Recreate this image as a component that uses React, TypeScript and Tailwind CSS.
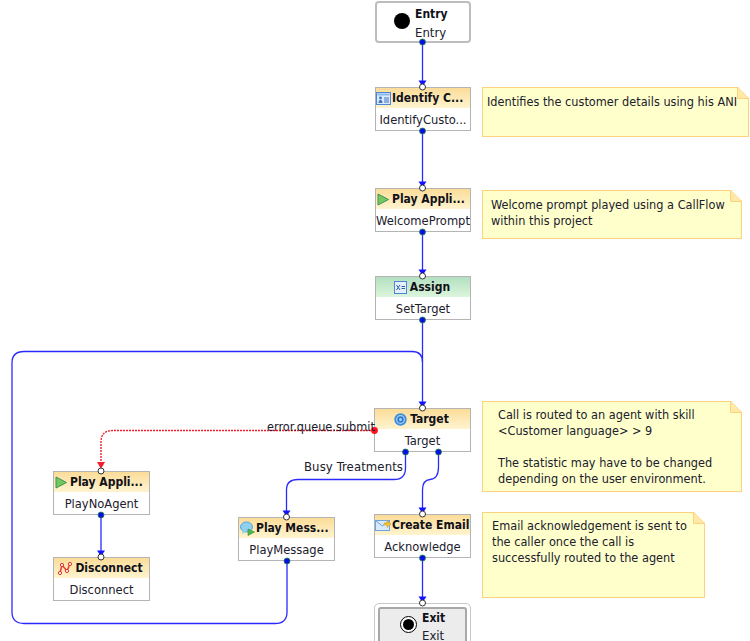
const font = "font-['DejaVu_Sans_Condensed','DejaVu_Sans',sans-serif]";

function IdentifyIcon() {
  return (
    <svg width="15" height="13" viewBox="0 0 15 13" className="shrink-0">
      <rect x="0.5" y="0.5" width="14" height="12" fill="#dbeafc" stroke="#4d86d6" />
      <rect x="1.5" y="1.5" width="12" height="2" fill="#8db8ec" />
      <circle cx="4.5" cy="6" r="1.4" fill="#3f74c4" />
      <path d="M2.5 11 Q2.5 8 4.5 8 Q6.5 8 6.5 11 Z" fill="#3f74c4" />
      <path d="M8 6h5M8 8h5M8 10h5" stroke="#3f74c4" />
    </svg>
  );
}

function PlayIcon() {
  return (
    <svg width="12" height="13" viewBox="0 0 12 13" className="shrink-0">
      <path d="M1 1 L11.5 6.5 L1 12 Z" fill="#74c860" stroke="#3f8f5a" />
    </svg>
  );
}

function AssignIcon() {
  return (
    <svg width="13" height="13" viewBox="0 0 13 13" className="shrink-0">
      <rect x="0.5" y="0.5" width="12" height="12" fill="#e6f0fc" stroke="#4d86d6" />
      <path d="M2.5 4 L6 9 M6 4 L2.5 9" stroke="#2c5ea8" />
      <path d="M7.5 5.5h3.5M7.5 7.5h3.5" stroke="#2c5ea8" />
    </svg>
  );
}

function TargetIcon() {
  return (
    <svg width="13" height="13" viewBox="0 0 13 13" className="shrink-0">
      <circle cx="6.5" cy="6.5" r="6.2" fill="#3d8fe0" />
      <circle cx="6.5" cy="6.5" r="4.4" fill="#a9d4f7" />
      <circle cx="6.5" cy="6.5" r="3.2" fill="#2b78d0" />
      <circle cx="6.5" cy="6.5" r="1.5" fill="#a9d4f7" />
    </svg>
  );
}

function DisconnectIcon() {
  return (
    <svg width="14" height="13" viewBox="0 0 14 13" className="shrink-0">
      <path d="M2 11 L4 3 L9 9 L12 2" fill="none" stroke="#e8302a" strokeWidth="1.4" />
      <circle cx="2" cy="11" r="1.6" fill="#fff" stroke="#e8302a" />
      <circle cx="4" cy="3" r="1.6" fill="#fff" stroke="#e8302a" />
      <circle cx="9" cy="9" r="1.6" fill="#fff" stroke="#e8302a" />
      <circle cx="12" cy="2" r="1.6" fill="#fff" stroke="#e8302a" />
    </svg>
  );
}

function MessageIcon() {
  return (
    <svg width="15" height="15" viewBox="0 0 15 15" className="shrink-0">
      <ellipse cx="6.5" cy="6" rx="6" ry="5" fill="#8fd0f0" stroke="#5aa5d6" />
      <path d="M3 9 L2 13 L6 10.5 Z" fill="#8fd0f0" />
      <path d="M8 8 L14.5 11 L8 14.5 Z" fill="#4cb84a" stroke="#2f8a3a" strokeWidth="0.6" />
    </svg>
  );
}

function EmailIcon() {
  return (
    <svg width="16" height="13" viewBox="0 0 16 13" className="shrink-0">
      <rect x="0.5" y="1.5" width="14" height="10" fill="#d8eafb" stroke="#6ea4dc" />
      <path d="M1 2 L7.5 7 L14 2" fill="none" stroke="#6ea4dc" />
      <path d="M9 4 H12 V1.5 L16 5 L12 8.5 V6 H9 Z" fill="#f4c430" stroke="#c9952a" strokeWidth="0.5" />
    </svg>
  );
}

type NodeProps = {
  place: string;
  title: string;
  name: string;
  icon: React.ReactNode;
  green?: boolean;
  titleAlign?: string;
};

function FlowNode({ place, title, name, icon, green, titleAlign = "justify-center gap-[3px] pr-[2px]" }: NodeProps) {
  return (
    <div className={`absolute h-[44px] border border-[#b4b4b4] bg-white ${place}`}>
      <div
        className={`flex h-[20px] items-center bg-gradient-to-b ${titleAlign} ${
          green ? "from-[#b3dfc0] to-[#dcf6dc]" : "from-[#fbdc98] to-[#fff4cf]"
        }`}
      >
        {icon}
        <span className="whitespace-nowrap text-[12px] font-bold text-[#101018]">{title}</span>
      </div>
      <div className="flex h-[23px] items-center justify-center whitespace-nowrap pt-[1px] text-[12.8px] text-[#20202c]">
        {name}
      </div>
    </div>
  );
}

function Note({ place, lines, pad }: { place: string; lines: string[]; pad: string }) {
  return (
    <div className={`absolute border border-[#fdd27c] bg-[#ffffcc] text-[12.6px] leading-[16px] text-[#20202c] ${place} ${pad}`}>
      {lines.map((line, i) => (
        <div key={i} className="h-[16px] whitespace-nowrap">
          {line}
        </div>
      ))}
      <svg width="12" height="12" viewBox="0 0 12 12" className="absolute -right-px -top-px">
        <path d="M0 0 L12 12 H0 Z" fill="#ffffcc" />
        <path d="M0 0 H0.5 L12 11.5 H0.5 V0" fill="#ffe8a8" stroke="#fdd27c" />
        <path d="M1 0 L12 0 L12 11 Z" fill="#fff" />
      </svg>
    </div>
  );
}

function Wires() {
  const blue = "#2a2aff";
  const blueEdges = [
    "M422.5 42 V84",
    "M422.5 130 V185",
    "M422.5 232 V273",
    "M422.5 320 V405",
    "M405.5 452 V468 Q405.5 479.5 394 479.5 H298 Q286.5 479.5 286.5 490 V514",
    "M438.5 452 V467 Q438.5 479 430 479.5 Q422.5 480 422.5 490 V511",
    "M101 515 V554",
    "M422.5 558 V600",
    "M287 561 V612 Q287 623.5 275 623.5 H24 Q12 623.5 12 612 V363 Q12 351.5 24 351.5 H412 Q422.5 351.5 422.5 362",
  ];
  const arrows = [
    [422.5, 85],
    [422.5, 186],
    [422.5, 274],
    [422.5, 406],
    [286.5, 515],
    [422.5, 512],
    [101, 555],
    [422.5, 601],
  ];
  const inputs = [
    [422.5, 87],
    [422.5, 188],
    [422.5, 276],
    [422.5, 408],
    [101, 471],
    [286.5, 517],
    [422.5, 514],
    [101, 557],
    [422.5, 603],
  ];
  const outputs = [
    [422.5, 42],
    [422.5, 131],
    [422.5, 232],
    [422.5, 320],
    [405.5, 452],
    [438.5, 452],
    [101, 515],
    [287, 561],
    [422.5, 558],
  ];
  return (
    <svg width="750" height="641" viewBox="0 0 750 641" className="absolute left-0 top-0">
      {blueEdges.map((d) => (
        <path key={d} d={d} fill="none" stroke={blue} strokeWidth="1.3" />
      ))}
      <path
        d="M374 430.5 H113 Q101 430.5 101 442 V468"
        fill="none"
        stroke="#f0202c"
        strokeWidth="1.4"
        strokeDasharray="2 1"
      />
      <path d="M97 462 H105 L101 469 Z" fill="#f0202c" />
      {arrows.map(([x, y]) => (
        <path key={`a${x}-${y}`} d={`M${x - 4} ${y - 4.5} H${x + 4} L${x} ${y + 1.5} Z`} fill="#1212ff" />
      ))}
      {inputs.map(([x, y]) => (
        <circle key={`i${x}-${y}`} cx={x} cy={y} r="3" fill="#fff" stroke="#333" strokeWidth="1" />
      ))}
      {outputs.map(([x, y]) => (
        <circle key={`o${x}-${y}`} cx={x} cy={y} r="3" fill="#0a0aee" stroke="#1f8a3a" strokeWidth="0.8" />
      ))}
      <circle cx="374.5" cy="430.5" r="3.4" fill="#ff1020" />
    </svg>
  );
}

export default function App() {
  return (
    <div className={`relative h-[641px] w-[750px] overflow-hidden bg-white ${font}`}>
      <div className="absolute left-[375px] top-[1px] h-[42px] w-[96px] overflow-hidden rounded-[4px] border-2 border-[#bdbdbd] bg-white text-[12px] text-[#20202c]">
        <div className="absolute left-[17px] top-[10px] h-[16px] w-[16px] rounded-full bg-black" />
        <div className="absolute left-[38px] top-[2px] font-bold text-[#101018]">Entry</div>
        <div className="absolute left-[38px] top-[21px] h-[16px] overflow-hidden text-[13px] leading-[18px]">Entry</div>
      </div>

      <FlowNode place="left-[375px] top-[87px] w-[96px]" title="Identify C..." name="IdentifyCusto..." icon={<IdentifyIcon />} titleAlign="justify-start gap-[1px]" />
      <FlowNode place="left-[375px] top-[188px] w-[96px]" title="Play Appli..." name="WelcomePrompt" icon={<PlayIcon />} titleAlign="justify-start gap-[3px] pl-[1px]" />
      <FlowNode place="left-[375px] top-[276px] w-[96px]" title="Assign" name="SetTarget" icon={<AssignIcon />} green />
      <FlowNode place="left-[374px] top-[408px] w-[97px]" title="Target" name="Target" icon={<TargetIcon />} />
      <FlowNode place="left-[53px] top-[471px] w-[97px]" title="Play Appli..." name="PlayNoAgent" icon={<PlayIcon />} titleAlign="justify-start gap-[3px] pl-[1px]" />
      <FlowNode place="left-[53px] top-[557px] w-[97px]" title="Disconnect" name="Disconnect" icon={<DisconnectIcon />} />
      <FlowNode place="left-[238px] top-[517px] w-[97px]" title="Play Mess..." name="PlayMessage" icon={<MessageIcon />} titleAlign="justify-start gap-[1px] pl-[1px]" />
      <FlowNode place="left-[374px] top-[514px] w-[97px]" title="Create Email" name="Acknowledge" icon={<EmailIcon />} titleAlign="justify-start gap-[1px]" />

      <div className="absolute left-[374px] top-[603px] h-[60px] w-[97px] rounded-[5px] border border-[#c8c8c8] bg-white p-[3px]">
        <div className="relative h-full rounded-[3px] border-2 border-[#a8a8a8] bg-[#ececec] text-[12px] text-[#20202c]">
          <div className="absolute left-[20px] top-[7px] flex h-[17px] w-[17px] items-center justify-center rounded-full border border-black bg-white">
            <div className="h-[11px] w-[11px] rounded-full bg-black" />
          </div>
          <div className="absolute left-[42px] top-[0px] font-bold text-[#101018]">Exit</div>
          <div className="absolute left-[42px] top-[17px] text-[13px]">Exit</div>
        </div>
      </div>

      <Note place="left-[482px] top-[87px] h-[50px] w-[267px]" pad="pl-[4px] pt-[6px]" lines={["Identifies the customer details using his ANI"]} />
      <Note place="left-[482px] top-[190px] h-[49px] w-[260px]" pad="pl-[8px] pt-[6px]" lines={["Welcome prompt played using a CallFlow", "within this project"]} />
      <Note
        place="left-[482px] top-[401px] h-[91px] w-[260px]"
        pad="pl-[15px] pt-[5px]"
        lines={["Call is routed to an agent with skill", "<Customer language> > 9", "", "The statistic may have to be changed", "depending on the user environment."]}
      />
      <Note
        place="left-[482px] top-[512px] h-[86px] w-[223px]"
        pad="pl-[9px] pt-[5px]"
        lines={["Email acknowledgement is sent to", "the caller once the call is", "successfully routed to the agent"]}
      />

      <Wires />

      <div className="absolute left-[267px] top-[419px] text-[12.6px] leading-[16px] text-[#20202c]">error.queue.submit</div>
      <div className="absolute left-[304px] top-[459px] text-[13px] leading-[16px] tracking-[0.1px] text-[#20202c]">Busy Treatments</div>
    </div>
  );
}
